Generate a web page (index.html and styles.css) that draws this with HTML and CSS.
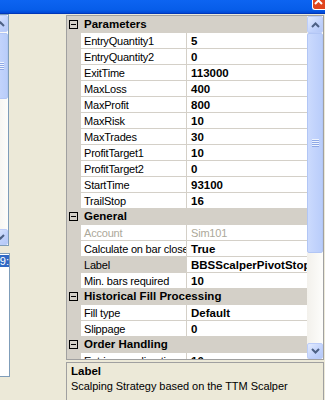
FILE: index.html
```html
<!DOCTYPE html>
<html lang="en">
<head>
  <meta charset="UTF-8" />
  <title>Strategy Properties</title>
  <link rel="stylesheet" href="styles.css">
</head>
<body>
  <div class="titlebar">
    <div class="close-btn">
      <svg width="12" height="9" viewBox="0 0 12 9"><path d="M2 -3 L9 4 M9 -3 L2 4" stroke="#fff" stroke-width="2" fill="none"/></svg>
    </div>
  </div>

  <div class="main">
    <div class="side">
      <div class="listbox">
        <div class="vscroll small">
          <div class="sb-btn up">
            <svg width="9" height="6"><polyline points="1,5 4.5,1.5 8,5" fill="none" stroke="#4d6185" stroke-width="2"/></svg>
          </div>
          <div class="sb-thumb short"><span class="grip"></span></div>
          <div class="sb-track"></div>
          <div class="sb-btn down">
            <svg width="9" height="6"><polyline points="1,1 4.5,4.5 8,1" fill="none" stroke="#4d6185" stroke-width="2"/></svg>
          </div>
        </div>
      </div>
      <div class="textbox"><span class="sel">9:</span></div>
    </div>

    <div class="panel">
      <div class="grid">
        <div class="rows">
          <div class="cat"><span class="toggle"></span>Parameters</div>
          <div class="prop"><span class="name">EntryQuantity1</span><span class="value">5</span></div>
          <div class="prop"><span class="name">EntryQuantity2</span><span class="value">0</span></div>
          <div class="prop"><span class="name">ExitTime</span><span class="value">113000</span></div>
          <div class="prop"><span class="name">MaxLoss</span><span class="value">400</span></div>
          <div class="prop"><span class="name">MaxProfit</span><span class="value">800</span></div>
          <div class="prop"><span class="name">MaxRisk</span><span class="value">10</span></div>
          <div class="prop"><span class="name">MaxTrades</span><span class="value">30</span></div>
          <div class="prop"><span class="name">ProfitTarget1</span><span class="value">10</span></div>
          <div class="prop"><span class="name">ProfitTarget2</span><span class="value">0</span></div>
          <div class="prop"><span class="name">StartTime</span><span class="value">93100</span></div>
          <div class="prop"><span class="name">TrailStop</span><span class="value">16</span></div>

          <div class="cat"><span class="toggle"></span>General</div>
          <div class="prop disabled"><span class="name">Account</span><span class="value">Sim101</span></div>
          <div class="prop"><span class="name">Calculate on bar close</span><span class="value">True</span></div>
          <div class="prop selected"><span class="name">Label</span><span class="value">BBSScalperPivotStop</span></div>
          <div class="prop"><span class="name">Min. bars required</span><span class="value">10</span></div>

          <div class="cat"><span class="toggle"></span>Historical Fill Processing</div>
          <div class="prop"><span class="name">Fill type</span><span class="value">Default</span></div>
          <div class="prop"><span class="name">Slippage</span><span class="value">0</span></div>

          <div class="cat"><span class="toggle"></span>Order Handling</div>
          <div class="prop"><span class="name">Entries per direction</span><span class="value">10</span></div>
        </div>

        <div class="vscroll">
          <div class="sb-btn up">
            <svg width="9" height="6"><polyline points="1,5 4.5,1.5 8,5" fill="none" stroke="#4d6185" stroke-width="2"/></svg>
          </div>
          <div class="sb-thumb long"><span class="grip"></span></div>
          <div class="sb-track"></div>
          <div class="sb-btn down">
            <svg width="9" height="6"><polyline points="1,1 4.5,4.5 8,1" fill="none" stroke="#4d6185" stroke-width="2"/></svg>
          </div>
        </div>
      </div>

      <div class="help">
        <div class="help-title">Label</div>
        <div class="help-text">Scalping Strategy based on the TTM Scalper</div>
      </div>
    </div>
  </div>
</body>
</html>
```

FILE: styles.css
```css
body {
  margin: 0;
  width: 325px;
  height: 400px;
  overflow: hidden;
  background: #ece9d8;
  font-family: "Liberation Sans", Arial, sans-serif;
  font-size: 11px;
  color: #000;
}
.titlebar {
  height: 13px;
  border-bottom: 1px solid #0036b8;
  background: linear-gradient(#0d64f1, #075de9 75%, #0047d6);
  display: flex;
  justify-content: flex-end;
}
.close-btn {
  width: 12px;
  height: 9px;
  background: #e0461f;
  border-left: 1px solid #fff;
  border-bottom: 1px solid #fff;
  border-bottom-left-radius: 3px;
  overflow: hidden;
}
.close-btn svg {
  display: block;
}
.main {
  display: flex;
}
.side {
  width: 10px;
  flex: none;
}
.listbox {
  width: 9px;
  height: 232px;
  box-sizing: border-box;
  border: 1px solid #7f9db9;
  border-left: 0;
  background: #fff;
  display: flex;
  justify-content: flex-end;
  overflow: hidden;
}
.textbox {
  margin-top: 7px;
  width: 10px;
  height: 124px;
  box-sizing: border-box;
  border: 1px solid #7f9db9;
  border-left: 0;
  background: #fff;
  padding-top: 1px;
  display: flex;
  justify-content: flex-end;
  align-items: flex-start;
  overflow: hidden;
}
.sel {
  background: #316ac5;
  color: #fff;
  line-height: 12px;
  white-space: nowrap;
}

/* scrollbars */
.vscroll {
  flex: none;
  width: 16px;
  display: flex;
  flex-direction: column;
  background: linear-gradient(to right, #f3f1ec, #fdfdfb);
}
.sb-btn {
  height: 16px;
  flex: none;
  box-sizing: border-box;
  border: 1px solid #bccdf9;
  border-radius: 2px;
  background: linear-gradient(to bottom right, #e3ebfe, #c2d3fc 60%, #b4c8f7);
  display: flex;
  align-items: center;
  justify-content: center;
}
.sb-btn.up {
  height: 17px;
}
.sb-thumb {
  flex: none;
  box-sizing: border-box;
  border: 1px solid #b2c6f5;
  border-radius: 2px;
  background: linear-gradient(to right, #cbdafd, #c2d3fc 50%, #b9cdfa);
  display: flex;
  align-items: center;
  justify-content: center;
}
.sb-thumb.long {
  height: 220px;
}
.sb-thumb.short {
  height: 66px;
  margin-top: 1px;
}
.sb-track {
  flex: 1;
}
.grip {
  width: 7px;
  height: 8px;
  background: repeating-linear-gradient(#eef4fe 0 1px, #8ea8e6 1px 2px);
}

/* property grid */
.panel {
  margin-left: 56px;
  width: 258px;
  padding-top: 1px;
}
.grid {
  height: 343px;
  border: 1px solid #a0a0a0;
  display: flex;
}
.rows {
  width: 240px;
  flex: none;
  padding-top: 1px;
  box-sizing: border-box;
  background: #d4d0c8;
  overflow: hidden;
}
.cat {
  height: 16px;
  box-sizing: border-box;
  border-bottom: 1px solid #d4d0c8;
  padding-left: 2px;
  display: flex;
  align-items: center;
  font-weight: bold;
  font-size: 11.5px;
  line-height: 13px;
  white-space: nowrap;
}
.toggle {
  width: 9px;
  height: 9px;
  box-sizing: border-box;
  border: 1px solid #000;
  margin-right: 6px;
  display: flex;
  align-items: center;
  justify-content: center;
}
.toggle::before {
  content: '';
  width: 5px;
  height: 1px;
  background: #000;
}
.prop {
  height: 16px;
  padding-left: 14px;
  display: flex;
}
.name,
.value {
  box-sizing: border-box;
  height: 16px;
  background: #fff;
  border-bottom: 1px solid #d4d0c8;
  padding-top: 2px;
  line-height: 13px;
  white-space: nowrap;
  overflow: hidden;
}
.name {
  width: 106px;
  flex: none;
  border-right: 1px solid #d4d0c8;
  padding-left: 3px;
  letter-spacing: -0.2px;
}
.value {
  flex: 1;
  min-width: 0;
  padding-left: 4px;
  font-weight: bold;
  font-size: 11.5px;
}
.disabled .name,
.disabled .value {
  color: #aca899;
  font-weight: normal;
}
.disabled .value {
  font-size: 11px;
  letter-spacing: -0.2px;
}
.selected .name {
  background: #d4d0c8;
}

/* help box */
.help {
  margin-top: 2px;
  height: 36px;
  border: 1px solid #a0a0a0;
  border-bottom: 0;
  padding: 1px 4px 0;
  line-height: 15px;
}
.help-title {
  font-weight: bold;
  font-size: 11.5px;
}
.help-text {
  letter-spacing: -0.05px;
}
```
